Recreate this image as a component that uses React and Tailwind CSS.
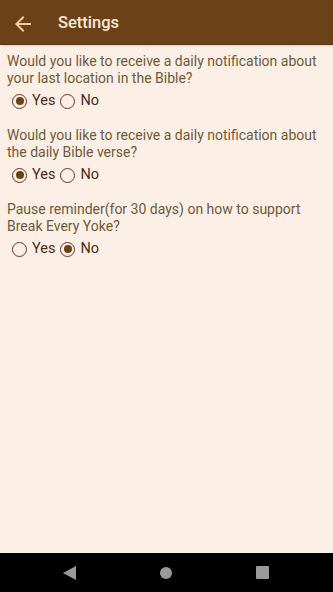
import React, { useState } from 'react';

const questions = [
  {
    id: 'location',
    text: 'Would you like to receive a daily notification about your last location in the Bible?',
    value: 'yes',
  },
  {
    id: 'verse',
    text: 'Would you like to receive a daily notification about the daily Bible verse?',
    value: 'yes',
  },
  {
    id: 'support',
    text: 'Pause reminder(for 30 days) on how to support Break Every Yoke?',
    value: 'no',
  },
];

// Radio bulat bergaya Android
const Radio = ({ checked, label, onClick }) => (
  <button onClick={onClick} className="flex items-center h-6 mr-[5px]">
    <span className="w-[15px] h-[15px] rounded-full border-[1.5px] border-[#7a2c1e] flex items-center justify-center">
      {checked && <span className="w-[8px] h-[8px] rounded-full bg-[#6b4217]" />}
    </span>
    <span className="ml-[5px] text-[14.5px] text-[#4e2a1c]">{label}</span>
  </button>
);

export default function App() {
  const [answers, setAnswers] = useState(
    Object.fromEntries(questions.map((q) => [q.id, q.value]))
  );

  return (
    <div className="w-[333px] h-[592px] flex flex-col bg-[#fcf0e6] font-['Roboto',sans-serif]">
      <header className="h-[45px] pt-[3px] bg-[#6b4217] border-b border-[#5a3410] flex items-center shrink-0 shadow-sm">
        <svg width="24" height="24" viewBox="0 0 24 24" className="ml-[11px]">
          <path d="M20 11H7.83l5.59-5.59L12 4l-8 8 8 8 1.41-1.41L7.83 13H20v-2z" fill="#f6c9a6" />
        </svg>
        <h1 className="ml-[23px] text-[16.5px] font-medium text-[#fde9d9]">Settings</h1>
      </header>

      <main className="flex-1 pt-[8px] px-[7px]">
        {questions.map((q) => (
          <div key={q.id} className="mb-[14px]">
            <p className="text-[14px] leading-[17px] text-[#6e5a3c] pr-2">{q.text}</p>
            <div className="flex items-center pl-[5px] mt-[2px]">
              <Radio
                checked={answers[q.id] === 'yes'}
                label="Yes"
                onClick={() => setAnswers({ ...answers, [q.id]: 'yes' })}
              />
              <Radio
                checked={answers[q.id] === 'no'}
                label="No"
                onClick={() => setAnswers({ ...answers, [q.id]: 'no' })}
              />
            </div>
          </div>
        ))}
      </main>

      <nav className="h-[39px] bg-black flex items-center shrink-0 pl-[63px] gap-[84px]">
        <svg width="13" height="14" viewBox="0 0 13 14">
          <path d="M13 0v14L0 7z" fill="#9a9a9a" />
        </svg>
        <span className="w-[12px] h-[12px] rounded-full bg-[#9a9a9a]" />
        <span className="w-[13px] h-[13px] rounded-[1px] bg-[#9a9a9a]" />
      </nav>
    </div>
  );
}
